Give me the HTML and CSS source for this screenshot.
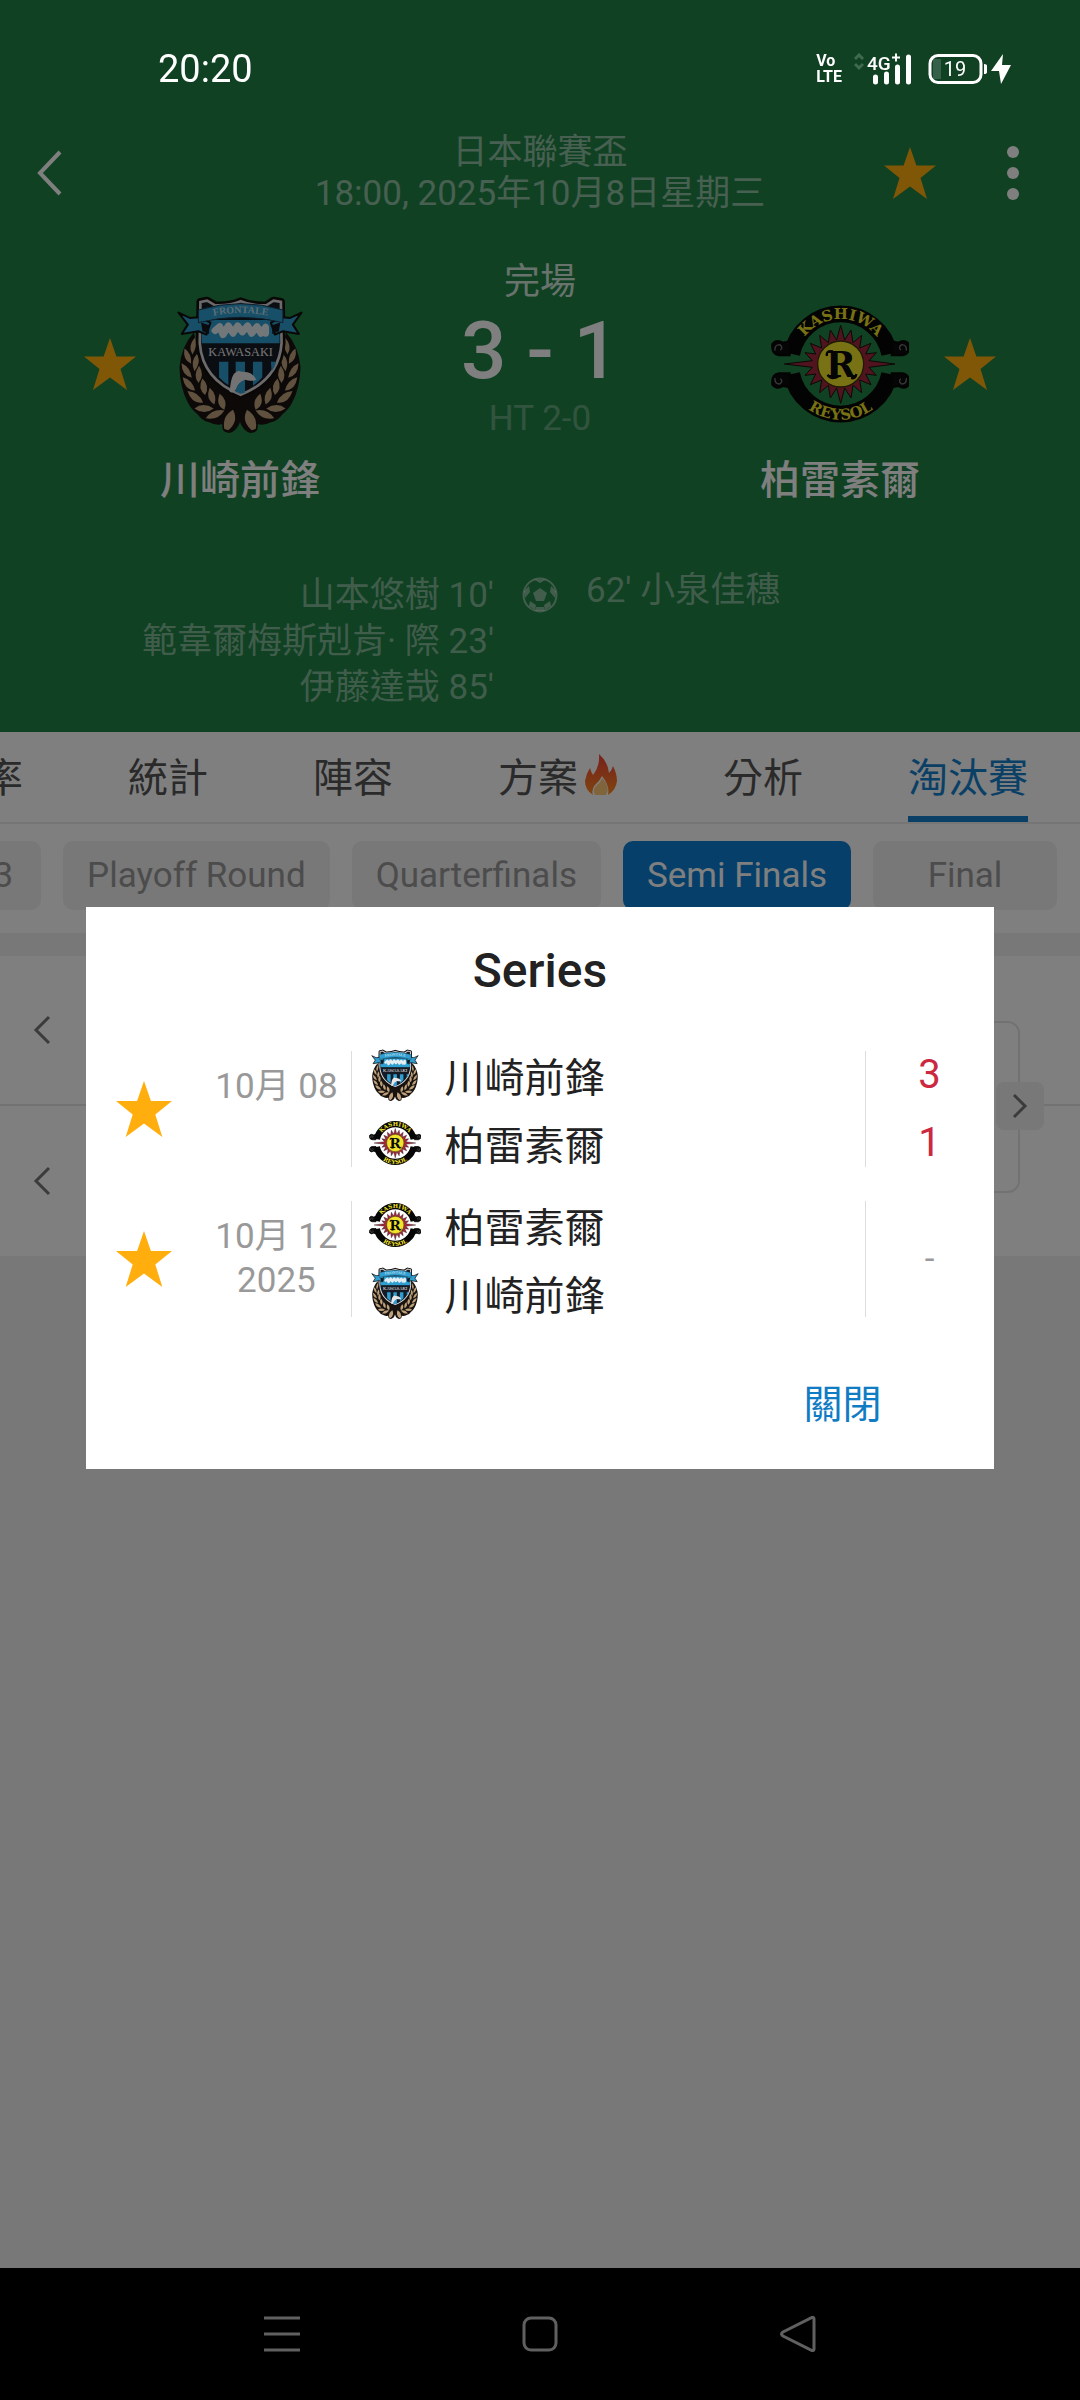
FILE: index.html
```html
<!DOCTYPE html>
<html lang="zh-Hant">
<head>
    <meta charset="UTF-8">
    <meta name="viewport" content="width=device-width, initial-scale=1.0">
    <title>川崎前鋒 3 - 1 柏雷素爾</title>
    <link rel="stylesheet" href="styles.css">
</head>
<body>
    <!-- shared icons -->
    <svg class="sprite" aria-hidden="true">
        <symbol id="star" viewBox="0 0 52 52">
            <path fill="currentColor" d="M26 0l6.400 18.500H52L36.500 31 43 52 26 39.500 9 52l6.500-21L0 18.500h19.600z"/>
        </symbol>
    </svg>

    <div class="status-bar">
        <span class="clock">20:20</span>
        <div class="status-icons">
            <span class="volte"><b>Vo</b><b>LTE</b></span>
            <svg class="signal" viewBox="0 0 58 32">
                <path d="M1 6L5 2L9 6M1 11L5 15L9 11" fill="none" stroke="#3f6a4e" stroke-width="3"/>
                <text x="13" y="17" font-family="Roboto" font-size="19" font-weight="500" fill="#fff">4G</text>
                <path d="M38 4.500H46M42 .500V8.500" stroke="#fff" stroke-width="2"/>
                <path d="M21.500 24V29M32.500 21V29M43.500 14V29M54.500 4V29" stroke="#fff" stroke-width="5" stroke-linecap="round"/>
            </svg>
            <svg class="battery" viewBox="0 0 84 32">
                <path d="M5 6H13V26H5z" fill="#36604a"/>
                <rect x="2" y="2.500" width="51" height="27" rx="8" fill="none" stroke="#fff" stroke-width="3"/>
                <path d="M56 11q3 0 3 2v6q0 2-3 2z" fill="#fff"/>
                <text x="27" y="23" text-anchor="middle" font-family="Roboto" font-size="20" fill="#fff">19</text>
                <path d="M75 1L63 18H71L73 31L83 12H74z" fill="#fff"/>
            </svg>
        </div>
    </div>

    <header class="match-header">
        <div class="top-bar">
            <button class="icon-btn back" aria-label="Back">
                <svg width="26" height="48" viewBox="0 0 26 48"><path d="M23 3L3 24L23 45" fill="none" stroke="currentColor" stroke-width="4"/></svg>
            </button>
            <div class="match-info">
                <div>日本聯賽盃</div>
                <div>18:00, 2025年10月8日星期三</div>
            </div>
            <div class="actions">
                <button class="icon-btn star" aria-label="Favourite"><svg width="52" height="52"><use href="#star"/></svg></button>
                <button class="icon-btn" aria-label="More">
                    <svg width="12" height="54" viewBox="0 0 12 54" fill="currentColor"><circle cx="6" cy="6" r="6"/><circle cx="6" cy="27" r="6"/><circle cx="6" cy="48" r="6"/></svg>
                </button>
            </div>
        </div>

        <div class="scoreboard">
            <button class="icon-btn star team-star" aria-label="Favourite"><svg width="52" height="52"><use href="#star"/></svg></button>
            <div class="team">
                <svg class="crest" viewBox="45 45 380 415">
                    <g id="kawasaki">
                        <g id="laurel">
                            <path fill="#191310" d="M96 158Q58 200 53 262Q54 322 78 368Q88 388 108 404Q120 422 142 428Q160 438 182 434Q178 460 204 460Q236 450 240 400L240 340L120 250z"/>
                            <g fill="#bfa27c">
                                <path d="M100 172Q108 200 92 224Q76 200 100 172z"/>
                                <path d="M68 206Q90 220 88 252Q62 240 68 206z"/>
                                <path d="M59 250Q86 262 90 294Q60 286 59 250z"/>
                                <path d="M63 292Q92 300 100 332Q68 330 63 292z"/>
                                <path d="M77 334Q110 336 124 368Q90 374 77 334z"/>
                                <path d="M98 386Q124 366 156 386Q128 408 98 386z"/>
                                <path d="M132 416Q152 386 188 392Q170 422 132 416z"/>
                                <path d="M188 448Q180 410 214 390Q232 424 200 452z"/>
                                <path d="M106 222Q120 248 98 274Q84 246 106 222z"/>
                                <path d="M112 258Q130 286 110 310Q92 288 112 258z"/>
                                <path d="M122 296Q146 318 130 346Q106 326 122 296z"/>
                                <path d="M144 324Q168 346 158 374Q130 358 144 324z"/>
                                <path d="M174 342Q200 362 188 390Q160 376 174 342z"/>
                            </g>
                        </g>
                        <use href="#laurel" transform="translate(470 0) scale(-1 1)"/>
                        <path fill="#151b24" stroke="#12100f" stroke-width="24" stroke-linejoin="round" d="M116 66L136 62L160 76Q205 78 237 64Q270 78 314 76L336 62L358 66L360 190Q352 300 237 345Q122 300 114 190z"/>
                        <path fill="#151b24" stroke="#d8d4d6" stroke-width="8" d="M116 66L136 62L160 76Q205 78 237 64Q270 78 314 76L336 62L358 66L360 190Q352 300 237 345Q122 300 114 190z"/>
                        <path fill="#2e9fd0" d="M120 120H354V190H120z"/>
                        <path fill="#2e9fd0" d="M172 246H200V316Q185 306 172 292zM222 246H250V338L237 342 222 336zM274 246H302V292Q290 306 274 318zM328 246H344Q340 262 330 274z"/>
                        <text x="237" y="228" text-anchor="middle" font-family="Liberation Serif" font-size="37" fill="#f0ecee">KAWASAKI</text>
                        <path fill="#e9e6e8" d="M204 336Q208 284 222 278Q228 270 240 276Q272 274 284 300Q268 306 250 300Q228 308 222 330Q214 342 204 336z"/>
                        <path fill="#2e9fd0" stroke="#12100f" stroke-width="6" stroke-linejoin="round" d="M50 98L84 114L110 112L146 128L134 164L110 154L60 162L78 134zM420 98L386 114L362 112L328 128L340 164L364 154L412 162L394 134z"/>
                        <path fill="#12161c" d="M118 128L142 136V162L122 154zM356 128L332 136V162L352 154z"/>
                        <path fill="#2e9fd0" stroke="#1c3e58" stroke-width="3" d="M110 90Q237 52 364 90V128Q237 96 110 128z"/>
                        <path id="ribbon" fill="none" d="M136 112Q237 86 338 112"/>
                        <text font-family="Liberation Serif" font-size="30" font-weight="bold" fill="#b8dcea" text-anchor="middle"><textPath href="#ribbon" startOffset="50%">FRONTALE</textPath></text>
                        <path fill="none" stroke="#e4eef2" stroke-width="21" stroke-linecap="round" stroke-linejoin="round" d="M160 152L174 140L184 164L200 138L214 160L228 138L242 156L258 138L270 160L286 140L298 160L312 142V160"/>
                    </g>
                </svg>
                <div class="team-name">川崎前鋒</div>
            </div>
            <div class="result">
                <div class="state">完場</div>
                <div class="score">3 - 1</div>
                <div class="half-time">HT 2-0</div>
            </div>
            <div class="team">
                <svg class="crest" viewBox="36 40 414 360">
                    <g id="kashiwa">
                        <path fill="none" stroke="#060606" stroke-width="50" d="M98 190A150 150 0 0 1 392 190M98 250A150 150 0 0 0 392 250"/>
                        <g fill="#0a0a0a" stroke="#060606" stroke-width="6">
                            <path d="M40 160Q52 144 72 156L92 152V194H60Q36 190 40 160zM450 160Q438 144 418 156L398 152V194H430Q454 190 450 160z"/>
                            <path d="M40 282Q52 298 72 286L92 290V248H60Q36 252 40 282zM450 282Q438 298 418 286L398 290V248H430Q454 252 450 282z"/>
                        </g>
                        <g fill="none" stroke="#6c726e" stroke-width="4">
                            <path d="M48 180Q46 162 62 162Q74 170 64 178M442 180Q444 162 428 162Q416 170 426 178M48 262Q46 280 62 280Q74 272 64 264M442 262Q444 280 428 280Q416 272 426 264"/>
                        </g>
                        <path fill="#a3293c" stroke="#1a0c0e" stroke-width="3" d="M245 104L257 148L276 118L282 156L308 134L302 172L336 158L320 190L352 186L330 210L408 220L330 230L352 254L320 250L336 282L302 268L308 306L282 284L276 322L257 292L245 338L233 292L214 322L208 284L182 306L188 268L154 282L170 250L138 254L160 230L76 220L160 210L138 186L170 190L154 158L188 172L182 134L208 156L214 118L233 148z"/>
                        <circle cx="245" cy="220" r="69" fill="#f2e42a" stroke="#3a3208" stroke-width="4"/>
                        <text x="245" y="260" text-anchor="middle" font-family="DejaVu Serif" font-weight="bold" font-size="108" fill="#0a0a0a">R</text>
                        <path fill="none" stroke="#0a0a0a" stroke-width="7" d="M204 196Q200 178 222 182M206 252Q216 270 240 256M222 200V244M276 262Q290 266 292 250"/>
                        <path id="arc-top" fill="none" d="M110 220A135 135 0 0 1 380 220"/>
                        <path id="arc-bottom" fill="none" d="M78 220A167 167 0 0 0 412 220"/>
                        <g font-family="DejaVu Serif" font-weight="bold" font-size="45" fill="#f2e42a" text-anchor="middle">
                            <text><textPath href="#arc-top" startOffset="50%">KASHIWA</textPath></text>
                            <text><textPath href="#arc-bottom" startOffset="50%">REYSOL</textPath></text>
                        </g>
                    </g>
                </svg>
                <div class="team-name">柏雷素爾</div>
            </div>
            <button class="icon-btn star team-star" aria-label="Favourite"><svg width="52" height="52"><use href="#star"/></svg></button>
        </div>

        <div class="goals">
            <div class="goals-home">
                <div>山本悠樹 10'</div>
                <div>範韋爾梅斯剋肯· 際 23'</div>
                <div>伊藤達哉 85'</div>
            </div>
            <svg class="ball" viewBox="0 0 36 36">
                <circle cx="18" cy="18" r="16.500" fill="none" stroke="currentColor" stroke-width="2"/>
                <path fill="currentColor" d="M18 11l7 5-3 8h-8l-3-8zM12 2.500h12L18 6zM2 14l5-5 1 6-5 6zM34 14l-5-5-1 6 5 6zM7 29l1-5 6 4-1 5zM29 29l-1-5-6 4 1 5zM14 30h8l1 4h-10z"/>
            </svg>
            <div class="goals-away">62' 小泉佳穗</div>
        </div>
    </header>

    <nav class="tabs">
        <a href="#odds">率</a>
        <a href="#stats">統計</a>
        <a href="#lineups">陣容</a>
        <a href="#tips">方案<svg class="flame" viewBox="0 0 34 42">
            <defs>
                <linearGradient id="fire" x1="0" y1="0" x2="0" y2="1">
                    <stop offset="0" stop-color="#f0403a"/>
                    <stop offset="1" stop-color="#ff8a1e"/>
                </linearGradient>
            </defs>
            <path fill="url(#fire)" d="M15 0Q24 8 25 19Q28 16 29 12Q33 20 33 27Q32 36 24 41Q26 32 18 22Q15 28 11 31Q7 36 9 41Q1 36 1 27Q2 20 6 14Q7 18 9 21Q16 12 15 0z"/>
            <path fill="#ffc978" d="M18 24Q27 33 22 41H11Q8 35 13 31Q17 28 18 24z"/>
        </svg></a>
        <a href="#analysis">分析</a>
        <a href="#knockout" class="active">淘汰賽</a>
    </nav>

    <div class="rounds">
        <button class="chip">Round 3</button>
        <button class="chip">Playoff Round</button>
        <button class="chip">Quarterfinals</button>
        <button class="chip active">Semi Finals</button>
        <button class="chip">Final</button>
    </div>

    <main class="bracket">
        <div class="bracket-row">
            <button class="icon-btn" aria-label="Previous"><svg width="18" height="30" viewBox="0 0 18 30"><path d="M16 2L3 15L16 28" fill="none" stroke="currentColor" stroke-width="3"/></svg></button>
        </div>
        <div class="bracket-row">
            <button class="icon-btn" aria-label="Previous"><svg width="18" height="30" viewBox="0 0 18 30"><path d="M16 2L3 15L16 28" fill="none" stroke="currentColor" stroke-width="3"/></svg></button>
        </div>
        <div class="pair"></div>
        <button class="icon-btn next" aria-label="Next"><svg width="16" height="26" viewBox="0 0 16 26"><path d="M2 2L13 13L2 24" fill="none" stroke="currentColor" stroke-width="3"/></svg></button>
    </main>

    <div class="nav-bar">
        <svg viewBox="0 0 36 36"><path d="M0 2H36M0 18H36M0 34H36"/></svg>
        <svg viewBox="0 0 36 36"><rect x="2" y="2" width="32" height="32" rx="7"/></svg>
        <svg viewBox="0 0 36 36"><path d="M32 1.500Q34 1 34 3V33Q34 35 32 34.500L3 20Q0 18 3 16z"/></svg>
    </div>

    <div class="overlay">
        <div class="dialog" role="dialog" aria-labelledby="series-title">
            <h2 id="series-title">Series</h2>
            <div class="series">
                <div class="game">
                    <button class="icon-btn star" aria-label="Favourite"><svg width="56" height="56"><use href="#star"/></svg></button>
                    <div class="date">10月 08</div>
                    <div class="sides">
                        <div class="side"><svg class="badge" viewBox="45 45 380 415"><use href="#kawasaki"/></svg>川崎前鋒</div>
                        <div class="side"><svg class="badge" viewBox="36 40 414 360"><use href="#kashiwa"/></svg>柏雷素爾</div>
                    </div>
                    <div class="points"><span>3</span><span>1</span></div>
                </div>
                <div class="game">
                    <button class="icon-btn star" aria-label="Favourite"><svg width="56" height="56"><use href="#star"/></svg></button>
                    <div class="date">10月 12<br>2025</div>
                    <div class="sides">
                        <div class="side"><svg class="badge" viewBox="36 40 414 360"><use href="#kashiwa"/></svg>柏雷素爾</div>
                        <div class="side"><svg class="badge" viewBox="45 45 380 415"><use href="#kawasaki"/></svg>川崎前鋒</div>
                    </div>
                    <div class="points pending"><span>-</span></div>
                </div>
            </div>
            <button class="close-btn" onclick="closeDialog()">關閉</button>
        </div>
    </div>

    <script>
        function closeDialog() {
            document.querySelector('.overlay').style.display = 'none';
        }
    </script>
</body>
</html>
```

FILE: styles.css
```css
* {
    box-sizing: border-box;
}
body {
    margin: 0;
    min-height: 100vh;
    display: flex;
    flex-direction: column;
    overflow-x: hidden;
    background-color: #f0f0f0;
    color: #222;
    font-family: Roboto, "Noto Sans CJK TC", sans-serif;
    font-size: 35px;
}
button {
    font-family: inherit;
    border: none;
    cursor: pointer;
}
svg {
    display: block;
    flex-shrink: 0;
}
.sprite {
    position: absolute;
    width: 0;
    height: 0;
}
.icon-btn {
    display: flex;
    align-items: center;
    justify-content: center;
    padding: 0;
    background: none;
    color: inherit;
}
.star {
    color: #ffae0d;
}

/* status bar stays above the overlay */
.status-bar {
    position: absolute;
    top: 0;
    left: 0;
    right: 0;
    z-index: 20;
    display: flex;
    align-items: center;
    justify-content: space-between;
    height: 138px;
    padding: 0 68px 0 158px;
    color: #fff;
}
.clock {
    font-size: 38px;
}
.status-icons {
    display: flex;
    align-items: center;
}
.volte {
    display: flex;
    flex-direction: column;
    margin-right: 12px;
    font-size: 16px;
    line-height: 16px;
}
.volte b {
    font-weight: 700;
}
.signal {
    width: 58px;
    height: 32px;
    margin-right: 16px;
}
.battery {
    width: 84px;
    height: 32px;
}

/* match header */
.match-header {
    padding: 132px 0 21px;
    background-color: #208246;
    color: #fff;
}
.top-bar {
    display: grid;
    grid-template-columns: 1fr auto 1fr;
    align-items: center;
    padding: 0 61px 0 37px;
}
.back {
    justify-self: start;
}
.match-info {
    margin-left: 24px;
    color: rgba(255, 255, 255, 0.5);
    line-height: 41px;
    text-align: center;
}
.actions {
    display: flex;
    justify-content: flex-end;
    gap: 71px;
}
.scoreboard {
    display: grid;
    grid-template-columns: 52px 208px 1fr 208px 52px;
    align-items: start;
    padding: 44px 84px 0;
}
.team-star {
    margin-top: 80px;
}
.team {
    display: flex;
    flex-direction: column;
    align-items: center;
    padding-top: 37px;
}
.crest {
    width: 138px;
    height: 138px;
}
.team-name {
    margin-top: 18px;
    font-size: 40px;
    font-weight: 500;
    line-height: 60px;
}
.result {
    text-align: center;
}
.state {
    font-size: 36px;
    line-height: 48px;
    opacity: 0.8;
}
.score {
    font-size: 80px;
    font-weight: 500;
    line-height: 90px;
}
.half-time {
    line-height: 46px;
    opacity: 0.3;
}
.goals {
    display: grid;
    grid-template-columns: 1fr 36px 1fr;
    column-gap: 28px;
    margin-top: 62px;
    color: rgba(255, 255, 255, 0.45);
}
.goals-home {
    line-height: 46px;
    text-align: right;
}
.goals-away {
    line-height: 36px;
}
.ball {
    width: 36px;
    height: 36px;
    margin-top: 4px;
}

/* tabs */
.tabs {
    display: flex;
    justify-content: flex-end;
    gap: 105px;
    height: 92px;
    padding-right: 52px;
    overflow: hidden;
    border-bottom: 2px solid #ececec;
    background-color: #fff;
}
.tabs a {
    display: flex;
    flex-shrink: 0;
    align-items: center;
    padding-bottom: 4px;
    color: #555;
    font-size: 40px;
    text-decoration: none;
}
.tabs .active {
    border-bottom: 6px solid #1580cc;
    border-top: 6px solid transparent;
    color: #1580cc;
}
.flame {
    width: 34px;
    height: 42px;
    margin-left: 6px;
}

/* round picker */
.rounds {
    display: flex;
    justify-content: flex-end;
    gap: 22px;
    padding: 17px 23px 23px;
    overflow: hidden;
    background-color: #fff;
}
.chip {
    flex-shrink: 0;
    min-width: 184px;
    height: 69px;
    padding: 0 24px;
    border-radius: 10px;
    background-color: #f0f0f0;
    color: #999;
    font-size: 35px;
}
.chip.active {
    background-color: #0b7fd4;
    color: #fff;
}

/* knockout bracket */
.bracket {
    position: relative;
    margin-top: 23px;
    background-color: #fff;
    color: #777;
}
.bracket-row {
    display: flex;
    align-items: center;
    height: 150px;
    padding-left: 33px;
}
.bracket-row:first-child {
    border-bottom: 2px solid #e4e4e4;
}
.pair {
    position: absolute;
    top: 65px;
    right: 60px;
    width: 240px;
    height: 172px;
    border: 2px solid #e4e4e4;
    border-radius: 12px;
    background-color: #fff;
}
.next {
    position: absolute;
    top: 126px;
    right: 36px;
    width: 48px;
    height: 48px;
    border-radius: 8px;
    background-color: #f0f0f0;
}

/* system navigation */
.nav-bar {
    display: flex;
    align-items: center;
    justify-content: center;
    gap: 222px;
    height: 132px;
    margin-top: auto;
    background-color: #000;
}
.nav-bar svg {
    width: 36px;
    height: 36px;
    fill: none;
    stroke: #c0c0c0;
    stroke-width: 3;
}

/* dialog */
.overlay {
    position: fixed;
    inset: 0;
    z-index: 10;
    display: flex;
    align-items: center;
    justify-content: center;
    padding: 108px 0 132px;
    background-color: rgba(0, 0, 0, 0.5);
}
.dialog {
    display: flex;
    flex-direction: column;
    width: 84%;
    padding: 34px 0 38px;
    background-color: #fff;
}
.dialog h2 {
    margin: 0 0 50px;
    font-size: 48px;
    font-weight: 500;
    line-height: 60px;
    text-align: center;
}
.series {
    display: grid;
    gap: 34px;
}
.game {
    display: grid;
    grid-template-columns: 115px 150px 1fr 128px;
    height: 116px;
}
.date {
    align-self: center;
    min-height: 88px;
    color: #999;
    line-height: 44px;
    text-align: center;
}
.sides {
    display: flex;
    flex-direction: column;
    gap: 20px;
    padding-left: 17px;
    border-left: 1px solid #ddd;
    border-right: 1px solid #ddd;
}
.side {
    display: flex;
    align-items: center;
    gap: 23px;
    height: 48px;
    font-size: 40px;
}
.badge {
    width: 52px;
    height: 52px;
}
.points {
    display: flex;
    flex-direction: column;
    align-items: center;
    justify-content: center;
    gap: 20px;
    color: #cc2840;
    font-size: 40px;
    line-height: 48px;
}
.points.pending {
    color: #999;
    font-size: 35px;
}
.close-btn {
    align-self: flex-end;
    height: 60px;
    margin: 54px 112px 0 0;
    padding: 0;
    background: none;
    color: #0f7cc4;
    font-size: 39px;
}
```
